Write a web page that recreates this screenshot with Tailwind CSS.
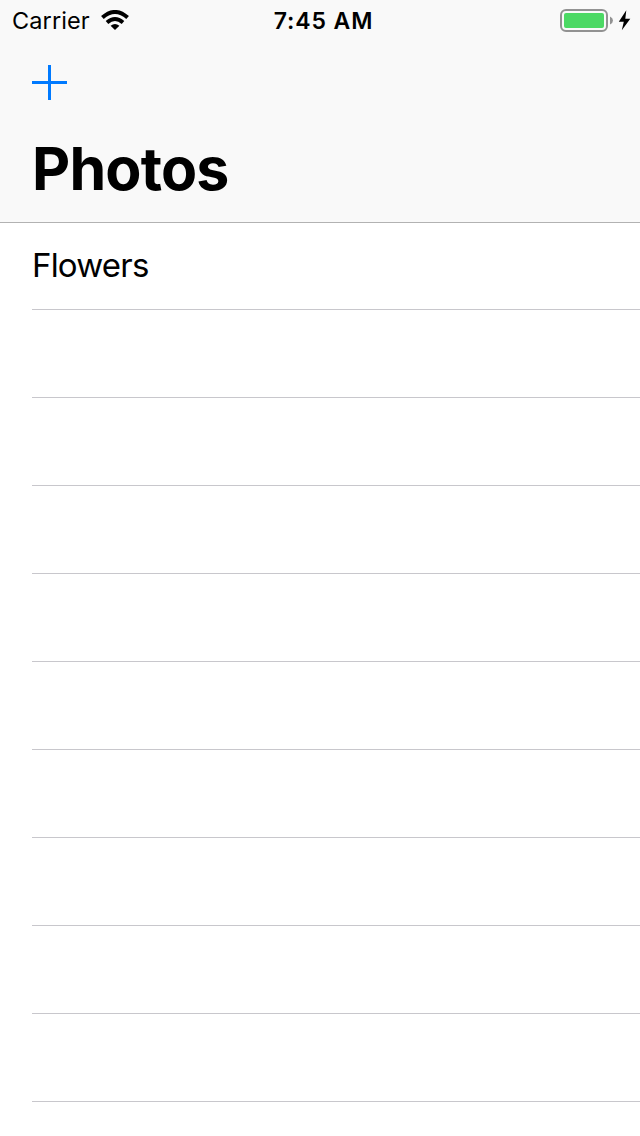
<!DOCTYPE html>
<html lang="en"><head><meta charset="utf-8"><title>Photos</title>
<script src="https://cdn.jsdelivr.net/npm/@tailwindcss/browser@4"></script></head>
<body class="w-[640px] h-[1136px] overflow-hidden bg-white text-black font-['Inter',sans-serif]">
<header class="h-[223px] bg-[#f9f9f9] border-b border-[#b2b2b2]">
<div class="h-10 grid grid-cols-3 items-center pl-3 pr-[9px]">
<div class="flex items-center gap-[11px]"><span class="text-[23.5px] leading-[38px] pt-px w-[78px] whitespace-nowrap tracking-[0.1px]">Carrier</span>
<svg class="w-[28px] h-[20px]" viewBox="0 0 28 20"><path d="M14 20 L9.6 15.8 Q14 12.4 18.4 15.8Z"/><path d="M6 12.4 Q14 5.6 22 12.4M1.4 7.6 Q14 -3.6 26.6 7.6" fill="none" stroke="#000" stroke-width="4"/></svg></div>
<div class="text-center text-[23px] leading-[38px] pt-0.5 pl-1 font-[570] whitespace-nowrap tracking-[0.9px]">7:45 AM</div>
<div class="flex items-center justify-end"><svg class="w-[71px] h-[24px]" viewBox="0 0 71 24"><rect x="1" y="2" width="46" height="21" rx="5" fill="none" stroke="#929292" stroke-width="2"/><rect x="4" y="5" width="40" height="15" rx="2" fill="#4cd964"/><path d="M50 8.5Q53 10 53 12.5T50 16.5Z" fill="#929292"/><path d="M66.3 2.3L58.8 13.8H63.8L61.8 22.2L70.3 10.7H65.3Z"/></svg></div>
</div>
<div class="h-[88px] pl-8 pt-[25px]"><svg class="w-[35px] h-[35px]" viewBox="0 0 35 35"><path d="M17.5 0V35M0 17.5H35" stroke="#007aff" stroke-width="3"/></svg></div>
<h1 class="pl-8 text-[59px] leading-[82px] font-bold tracking-[-0.8px]">Photos</h1>
</header>
<main>
<div class="ml-8 h-[87px] border-b border-[#c8c7cc] text-[33px] leading-[84px] tracking-[-0.8px]">Flowers</div>
<div class="ml-8 h-[88px] border-b border-[#c8c7cc]"></div>
<div class="ml-8 h-[88px] border-b border-[#c8c7cc]"></div>
<div class="ml-8 h-[88px] border-b border-[#c8c7cc]"></div>
<div class="ml-8 h-[88px] border-b border-[#c8c7cc]"></div>
<div class="ml-8 h-[88px] border-b border-[#c8c7cc]"></div>
<div class="ml-8 h-[88px] border-b border-[#c8c7cc]"></div>
<div class="ml-8 h-[88px] border-b border-[#c8c7cc]"></div>
<div class="ml-8 h-[88px] border-b border-[#c8c7cc]"></div>
<div class="ml-8 h-[88px] border-b border-[#c8c7cc]"></div>
</main></body></html>
